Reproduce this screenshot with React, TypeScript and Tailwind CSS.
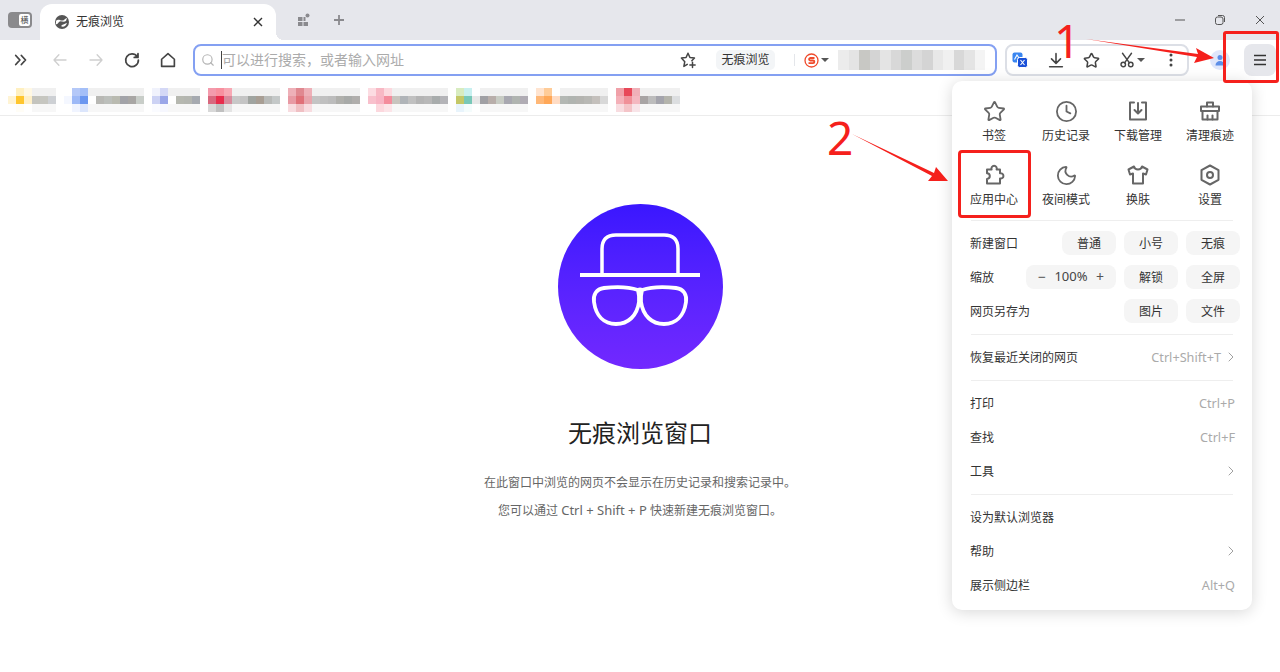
import { ChevronRight, Clock, Moon, Search, Star } from "lucide-react";
import type { ReactNode } from "react";

type Cell = [string, string, string];

const GT = "#f0f0f0";
const GB = "#f7f7f7";

const bookmarks: { icon: Cell[]; text: string[] }[] = [
  {
    icon: [
      ["#ffffff", "#fff4d4", "#ffffff"],
      ["#fff0c0", "#ffc62e", "#fffdf6"],
      ["#fff8e4", "#fff0c8", "#ffffff"],
    ],
    text: ["#c4c4be", "#c6c6c0", "#cdd0d4"],
  },
  {
    icon: [
      ["#ffffff", "#f4f7ff", "#ffffff"],
      ["#b4c8f8", "#9db9f7", "#f0f4ff"],
      ["#a4bff8", "#6b97f0", "#dce6fc"],
    ],
    text: ["#ffffff", "#b8b8b4", "#bcbfbb", "#b9bab0", "#a2a3a8", "#a8a6a4", "#c8cdc8"],
  },
  {
    icon: [
      ["#f0f2fc", "#ccd2f4", "#fafbff"],
      ["#d4d8f6", "#9aa6e8", "#f6f7fe"],
    ],
    text: ["#ffffff", "#b6b8b0", "#b4b6b0", "#a6aab0"],
  },
  {
    icon: [
      ["#f49aac", "#d8687e", "#d8d8d8"],
      ["#f8909f", "#e82c4c", "#c0c0c0"],
      ["#f8a8b4", "#d88a9c", "#e4e4e4"],
    ],
    text: ["#c8c8c8", "#c4c4c4", "#a0a4a0", "#a89e94", "#b8bab8", "#c4c8c8"],
  },
  {
    icon: [
      ["#eeb0b8", "#e89aa4", "#f8dce0"],
      ["#e08890", "#e07078", "#f0c0c4"],
      ["#eeb0b8", "#e8a4ac", "#f8dce0"],
    ],
    text: ["#c4c4c4", "#c0c0c0", "#bcbcbc", "#b0b0ac", "#a8aaa8", "#b0aeac"],
  },
  {
    icon: [
      ["#fcdce2", "#f8c0cc", "#ffffff"],
      ["#f8b8c4", "#f8b4c4", "#fcd8de"],
      ["#fcd8de", "#f48c9c", "#fce4e8"],
    ],
    text: ["#c8c4be", "#b0b4b8", "#c0c0c0", "#b4b4b4", "#b8b8b8", "#a8acac", "#b4b4b8"],
  },
  {
    icon: [
      ["#d8ecc0", "#c4c868", "#e8f4fc"],
      ["#c8f0f0", "#78c8b8", "#f4fcfc"],
      ["#ffffff", "#e8e8e8", "#ffffff"],
    ],
    text: ["#a0a0a4", "#b8aeaa", "#c8ccc4", "#a8a8b0", "#b0b4b0", "#b0acb4"],
  },
  {
    icon: [
      ["#ffe4d0", "#ffb878", "#ffffff"],
      ["#ffcc98", "#ffa858", "#ffffff"],
      ["#ffffff", "#ffdcc4", "#ffffff"],
    ],
    text: ["#b4b8b4", "#b0b4b0", "#b4b4b0", "#b8b8b4", "#c4c0bc", "#d8d8d8"],
  },
  {
    icon: [
      ["#f0a0a8", "#f4b0b8", "#f8dce0"],
      ["#e84858", "#f09098", "#f4c4c8"],
      ["#f0b0b8", "#f4b8c0", "#f8e4e8"],
    ],
    text: ["#a8a4a4", "#bcbcbc", "#a4a4ac", "#b4b4ac", "#dcdee0"],
  },
];

const urlMosaic = [
  "#ececec", "#e4e4e4", "#c8c8c4", "#d4d4d4", "#e4e4e4", "#d8d8d8", "#cccecc", "#dcdcdc",
  "#d4d4d4", "#e8e8e8", "#f0f0f0", "#d8d8d8", "#e4e4e4", "#f4f4f4",
];

function Mosaic({ cols }: { cols: Cell[] }) {
  return (
    <div className="flex">
      {cols.map((c, i) => (
        <div key={i} className="flex w-2 flex-col">
          {c.map((color, j) => (
            <div key={j} className="h-2 w-2" style={{ backgroundColor: color }} />
          ))}
        </div>
      ))}
    </div>
  );
}

function Ico({ children, size = 24, sw = 2 }: { children: ReactNode; size?: number; sw?: number }) {
  return (
    <svg
      width={size}
      height={size}
      viewBox="0 0 24 24"
      fill="none"
      stroke="currentColor"
      strokeWidth={sw}
      strokeLinecap="round"
      strokeLinejoin="round"
    >
      {children}
    </svg>
  );
}

function NavBtn({ children, className = "" }: { children: ReactNode; className?: string }) {
  return <div className={`flex h-9 w-9 items-center justify-center ${className}`}>{children}</div>;
}

function GridItem({ icon, label }: { icon: ReactNode; label: string }) {
  return (
    <div className="flex h-[64px] flex-col items-center text-[#333]">
      <div className="flex h-6 w-6 items-center justify-center text-[#666]">{icon}</div>
      <div className="mt-[5px] text-xs leading-4 text-[#333]">{label}</div>
    </div>
  );
}

function Pill({ children, className = "w-[54px] justify-center pt-[2px]" }: { children: ReactNode; className?: string }) {
  return (
    <div className={`flex h-6 items-center rounded-lg bg-[#f5f5f5] text-xs text-[#333] ${className}`}>
      {children}
    </div>
  );
}

function MenuRow({ label, hint, arrow }: { label: string; hint?: string; arrow?: boolean }) {
  return (
    <div className="flex h-[34px] items-center justify-between pr-[17px] pl-[18px] text-xs text-[#333]">
      <span className="pt-[2px]">{label}</span>
      <span className="flex items-center gap-[2px] text-[#aaa]">
        {hint && <span className="text-[12.700px]">{hint}</span>}
        {arrow && <ChevronRight size={16} strokeWidth={1.400} className="-mr-[4px] text-[#999]" />}
      </span>
    </div>
  );
}

function Divider() {
  return <div className="mx-[19px] mt-[6px] mb-[5px] h-px bg-[#eeeeee]" />;
}

function AppMenu() {
  return (
    <div className="absolute top-[81px] left-[952px] w-[300px] rounded-[10px] bg-white pt-[18px] pb-[8px] shadow-[0_2px_16px_rgba(0,0,0,0.16)]">
      <div className="grid grid-cols-4 px-[6px]">
        <GridItem icon={<Star size={23} strokeWidth={1.900} />} label="书签" />
        <GridItem icon={<Clock size={23} strokeWidth={1.900} />} label="历史记录" />
        <GridItem
          icon={
            <Ico>
              <path d="M8 3.500H4v17h16v-17h-4" />
              <path d="M12 4v10" />
              <path d="m8.500 11 3.500 3.500 3.500-3.500" />
            </Ico>
          }
          label="下载管理"
        />
        <GridItem
          icon={
            <Ico>
              <path d="M9 7.500V3.500h6v4" />
              <path d="M3 7.500h18v4.500H3z" />
              <path d="M4.500 12v8.500h15V12" />
              <path d="M9.500 20.500v-4" />
              <path d="M14.500 20.500v-4" />
            </Ico>
          }
          label="清理痕迹"
        />
        <GridItem
          icon={
            <Ico>
              <path d="M5 6.500h4.600a2.700 2.700 0 1 1 5 0H18v3.800a2.700 2.700 0 1 1 0 5.200v5H5v-4.600a2.800 2.800 0 0 0 0-5.600Z" />
            </Ico>
          }
          label="应用中心"
        />
        <GridItem icon={<Moon size={23} strokeWidth={1.900} />} label="夜间模式" />
        <GridItem
          icon={
            <Ico>
              <path d="M8 3.500 2.500 6.500l1.500 5 3-1v10h10v-10l3 1 1.500-5-5.500-3c-.5 2-2 3-4 3s-3.500-1-4-3Z" />
            </Ico>
          }
          label="换肤"
        />
        <GridItem
          icon={
            <Ico>
              <path d="M12 2.500 20.500 7.200v9.600L12 21.500l-8.500-4.700V7.200Z" />
              <circle cx="12" cy="12" r="3" />
            </Ico>
          }
          label="设置"
        />
      </div>
      <div className="mx-[19px] -mt-[7px] mb-[5px] h-px bg-[#eeeeee]" />

      <div className="flex h-[34px] items-center justify-between pr-[12px] pl-[18px] text-xs text-[#333]">
        <span className="pt-[2px]">新建窗口</span>
        <div className="flex gap-2">
          <Pill>普通</Pill>
          <Pill>小号</Pill>
          <Pill>无痕</Pill>
        </div>
      </div>
      <div className="flex h-[34px] items-center justify-between pr-[12px] pl-[18px] text-xs text-[#333]">
        <span className="pt-[2px]">缩放</span>
        <div className="flex gap-2">
          <Pill className="w-[90px] justify-between px-[12px]">
            <span className="text-sm leading-none text-[#555]">−</span>
            <span className="text-[13px] text-[#444]">100%</span>
            <span className="text-sm leading-none text-[#555]">+</span>
          </Pill>
          <Pill>解锁</Pill>
          <Pill>全屏</Pill>
        </div>
      </div>
      <div className="flex h-[34px] items-center justify-between pr-[12px] pl-[18px] text-xs text-[#333]">
        <span className="pt-[2px]">网页另存为</span>
        <div className="flex gap-2">
          <Pill>图片</Pill>
          <Pill>文件</Pill>
        </div>
      </div>
      <Divider />
      <MenuRow label="恢复最近关闭的网页" hint="Ctrl+Shift+T" arrow />
      <Divider />
      <MenuRow label="打印" hint="Ctrl+P" />
      <MenuRow label="查找" hint="Ctrl+F" />
      <MenuRow label="工具" arrow />
      <Divider />
      <MenuRow label="设为默认浏览器" />
      <MenuRow label="帮助" arrow />
      <MenuRow label="展示侧边栏" hint="Alt+Q" />
    </div>
  );
}

function Annotations() {
  return (
    <>
      <div className="absolute top-[31px] left-[1223px] h-[52px] w-[56px] rounded-[3px] border-[3px] border-[#f5201c]" />
      <div className="absolute top-[150px] left-[958px] h-[68px] w-[73px] rounded-[4px] border-[3px] border-[#f5201c]" />
      <div className="absolute top-[13px] left-[1054px] text-[46px] leading-[54px] text-[#f5201c]">1</div>
      <div className="absolute top-[110px] left-[827px] text-[46px] leading-[54px] text-[#f5201c]">2</div>
      <svg className="absolute top-0 left-0" width="1280" height="220" fill="#f5201c">
        <path d="M1086 39 L1198 54 L1196 48 L1214 58 L1194 63 L1197 57 Z" />
        <path d="M852 134 L934 173 L936 167 L948 181 L928 181 L932 176 Z" />
      </svg>
    </>
  );
}

export default function App() {
  return (
    <div className="relative h-[672px] w-[1280px] overflow-hidden bg-white font-['Noto_Sans','Noto_Sans_CJK_SC',sans-serif]">
      {/* tab strip */}
      <div className="flex h-10 items-end bg-[#e6e7ec]">
        <div className="mb-[12px] ml-2 flex h-4 w-6 items-center justify-end rounded-[4px] bg-[#8a8a8c] pr-[2px]">
          <div className="flex h-3 w-[11px] items-center justify-center rounded-[2px] bg-white text-[8px] leading-none text-[#444]">
            横
          </div>
        </div>
        <div className="relative ml-2 flex h-9 w-[236px] items-center rounded-t-xl bg-white pr-[13px] pl-[15px]">
          <svg width="14" height="14" viewBox="0 0 14 14" className="shrink-0">
            <circle cx="7" cy="7" r="7" fill="#555" />
            <path d="M1 6c3-3 5 1 8-1 1-1 2-2 3-2l-1 3c-3 2-5-1-7 1-1 1-2 3-3 2ZM6 11c2-2 4-2 6-3-1 3-4 5-6 3Z" fill="#fff" />
          </svg>
          <span className="ml-[7px] text-xs text-[#333]">无痕浏览</span>
          <svg className="ml-auto text-[#333]" width="10" height="10" viewBox="0 0 10 10" stroke="currentColor" strokeWidth="1.400">
            <path d="M1 1l8 8M9 1 1 9" />
          </svg>
          <div className="absolute right-[-8px] bottom-0 h-2 w-2 bg-[radial-gradient(circle_at_100%_0,#e6e7ec_8px,#ffffff_8px)]" />
        </div>
        <div className="mb-[13px] ml-[21px] text-[#8a8a8e]">
          <svg width="14" height="14" viewBox="0 0 14 14" fill="currentColor">
            <path d="M1 4h4.500v4H1zM1 9h4.500v4H1zM6.500 9h4.500v4H6.500zM6.500 4h2v4h-2z" />
            <circle cx="10.500" cy="2.500" r="2" />
          </svg>
        </div>
        <div className="mb-[13px] ml-[21px] text-[#8a8a8e]">
          <svg width="14" height="14" viewBox="0 0 14 14" stroke="currentColor" strokeWidth="1.800">
            <path d="M7 2v10M2 7h10" />
          </svg>
        </div>
        <div className="mb-[14px] ml-auto flex items-center text-[#555]">
          <NavBtn className="!h-3 w-10">
            <svg width="12" height="12" viewBox="0 0 12 12" stroke="currentColor" strokeWidth="1">
              <path d="M1 6h10" />
            </svg>
          </NavBtn>
          <NavBtn className="!h-3 w-10">
            <svg width="12" height="12" viewBox="0 0 12 12" fill="none" stroke="currentColor" strokeWidth="1">
              <rect x="1.500" y="3" width="7.500" height="7.500" rx="2" />
              <path d="M4 1.500h4.500a2 2 0 0 1 2 2V8" />
            </svg>
          </NavBtn>
          <NavBtn className="!h-3 w-10">
            <svg width="12" height="12" viewBox="0 0 12 12" stroke="currentColor" strokeWidth="1">
              <path d="M2 2l8 8M10 2l-8 8" />
            </svg>
          </NavBtn>
        </div>
      </div>

      {/* toolbar */}
      <div className="flex h-10 items-center bg-white pl-[2px]">
        <NavBtn className="ml-[1px] text-[#444]">
          <Ico size={18} sw={2.400}>
            <path d="m5 6 5.500 6L5 18M12.500 6l5.500 6-5.500 6" />
          </Ico>
        </NavBtn>
        <NavBtn className="ml-[3px] text-[#cfcfcf]">
          <Ico size={18} sw={1.800}>
            <path d="M20 12H4M10.500 5 4 12l6.500 7" />
          </Ico>
        </NavBtn>
        <NavBtn className="text-[#cfcfcf]">
          <Ico size={18} sw={1.800}>
            <path d="M4 12h16M13.500 5l6.500 7-6.500 7" />
          </Ico>
        </NavBtn>
        <NavBtn className="text-[#444]">
          <Ico size={18} sw={2.300}>
            <path d="M19 7.500A8.500 8.500 0 1 0 20.500 12" />
            <path d="M20 3.500v5h-5" fill="currentColor" />
          </Ico>
        </NavBtn>
        <NavBtn className="text-[#444]">
          <Ico size={18} sw={2.200}>
            <path d="M3.500 11 12 3.500l8.500 7.500v9.500h-17Z" />
          </Ico>
        </NavBtn>

        <div className="ml-[7px] flex h-8 w-[804px] items-center rounded-lg border-2 border-[#84a0f2] pl-[6px]">
          <Search size={14} strokeWidth={2} className="shrink-0 text-[#b4b4b4]" />
          <div className="ml-[6px] h-[18px] w-px shrink-0 bg-[#444]" />
          <span className="flex-1 text-sm text-[#ababab]">可以进行搜索，或者输入网址</span>
          <div className="flex items-center text-[#444]">
            <Ico size={18} sw={2}>
              <path d="M12 3l2.600 5.700 6 .7-3.500 3.500M11 17.700 6.500 20.500l1.200-6.300L3.200 9.400l6.200-.7L12 3" />
              <path d="M18 15v7M14.500 18.500h7" />
            </Ico>
          </div>
          <div className="mr-[19px] ml-[19px] flex h-5 w-[59px] items-center justify-center rounded-[5px] bg-[#f3f5f7] text-xs text-[#333]">
            无痕浏览
          </div>
          <div className="h-3 w-px bg-[#e4e6ea]" />
          <div className="ml-[9px] flex items-center">
            <svg width="15" height="15" viewBox="0 0 15 15">
              <circle cx="7.500" cy="7.500" r="6.500" fill="none" stroke="#ef4b2c" strokeWidth="1.300" />
              <path d="M10.500 5H6a1.300 1.300 0 0 0 0 2.500h3a1.300 1.300 0 0 1 0 2.700H4.500" fill="none" stroke="#ef4b2c" strokeWidth="1.800" />
            </svg>
            <div className="ml-[2px] h-0 w-0 border-x-[4px] border-t-[4px] border-x-transparent border-t-[#555]" />
          </div>
          <div className="mr-[10px] ml-[9px] flex w-[147px]">
            {urlMosaic.map((c, i) => (
              <div key={i} className="h-[20px] flex-1" style={{ backgroundColor: c }} />
            ))}
          </div>
        </div>

        <div className="ml-2 flex h-8 w-[184px] items-center rounded-lg border-2 border-[#dcdfe6] text-[#444]">
          <div className="ml-[5px]">
            <svg width="16" height="16" viewBox="0 0 16 16">
              <rect x="0.500" y="0.500" width="10" height="10" rx="2" fill="#3a86f0" />
              <rect x="5.500" y="5.500" width="10" height="10" rx="2" fill="#1a50d8" stroke="#fff" />
              <path d="M8.500 8l4 5M12.500 8l-4 5" stroke="#fff" strokeWidth="1.100" />
              <path d="M2.500 7.500 5 3l2 3" stroke="#fff" strokeWidth="1.100" fill="none" />
            </svg>
          </div>
          <div className="ml-[19px]">
            <Ico size={18} sw={2.100}>
              <path d="M12 3.500V16M6 10.500l6 6 6-6M3.500 21h17" />
            </Ico>
          </div>
          <div className="ml-[18px]">
            <Star size={17} strokeWidth={2.200} />
          </div>
          <div className="ml-[18px] flex items-center">
            <Ico size={18} sw={1.900}>
              <path d="M18 3 9 15.500M6 3l9 12.500" />
              <circle cx="7" cy="18" r="3" />
              <circle cx="17" cy="18" r="3" />
            </Ico>
            <div className="ml-[1px] h-0 w-0 border-x-[4px] border-t-[4px] border-x-transparent border-t-[#555]" />
          </div>
          <div className="ml-[24px]">
            <svg width="4" height="14" viewBox="0 0 4 14" fill="currentColor">
              <circle cx="2" cy="2" r="1.500" />
              <circle cx="2" cy="7" r="1.500" />
              <circle cx="2" cy="12" r="1.500" />
            </svg>
          </div>
        </div>

        <div className="ml-[21px] flex h-5 w-5 items-center justify-center rounded-full bg-[#dfe6fb]">
          <svg width="12" height="12" viewBox="0 0 12 12" fill="#5d8ee8">
            <circle cx="6" cy="3.500" r="2.500" />
            <path d="M1.500 11.500c0-3 2-4.500 4.500-4.500s4.500 1.500 4.500 4.500Z" />
          </svg>
        </div>
        <div className="ml-[14px] flex h-8 w-8 items-center justify-center rounded-lg bg-[#e6e7ec] text-[#333]">
          <svg width="12" height="12" viewBox="0 0 12 12" stroke="currentColor" strokeWidth="1.700">
            <path d="M0 1.500h12M0 6h12M0 10.500h12" />
          </svg>
        </div>
      </div>

      {/* bookmarks */}
      <div className="flex h-9 gap-2 border-b border-[#ececec] pt-2 pl-2">
        {bookmarks.map((b, i) => (
          <Mosaic key={i} cols={[...b.icon, ...b.text.map((t): Cell => [GT, t, GB])]} />
        ))}
      </div>

      {/* incognito page */}
      <div className="flex flex-col items-center pt-[88px]">
        <div className="h-[165px] w-[165px] rounded-full bg-gradient-to-b from-[#3a16ff] to-[#7228ff]">
          <svg width="165" height="165" viewBox="0 0 165 165" fill="none" stroke="#fff">
            <path d="M22 71H142" strokeWidth="4" />
            <path d="M44 71V45Q44 31 58 31H106Q120 31 120 45V71" strokeWidth="3.500" />
            <path
              d="M80 86C68 82 54 83 46 84C38 85 35 91 36 98C38 112 46 120 58 120C70 120 79 112 81 98C81.500 94 81 90 80 86C81 85.500 83 85.500 84 86C83 90 82.500 94 83 98C85 112 94 120 106 120C118 120 126 112 128 98C129 91 126 85 118 84C110 83 96 82 84 86"
              strokeWidth="3.800"
              strokeLinejoin="round"
            />
          </svg>
        </div>
        <h1 className="mt-[46px] text-2xl leading-9 font-normal text-[#222]">无痕浏览窗口</h1>
        <p className="mt-[18px] text-xs leading-7 text-[#666]">在此窗口中浏览的网页不会显示在历史记录和搜索记录中。</p>
        <p className="-mt-px text-xs leading-7 text-[#666]">
          您可以通过 <span className="text-[13px]">Ctrl + Shift + P</span> 快速新建无痕浏览窗口。
        </p>
      </div>

      <AppMenu />
      <Annotations />
    </div>
  );
}
